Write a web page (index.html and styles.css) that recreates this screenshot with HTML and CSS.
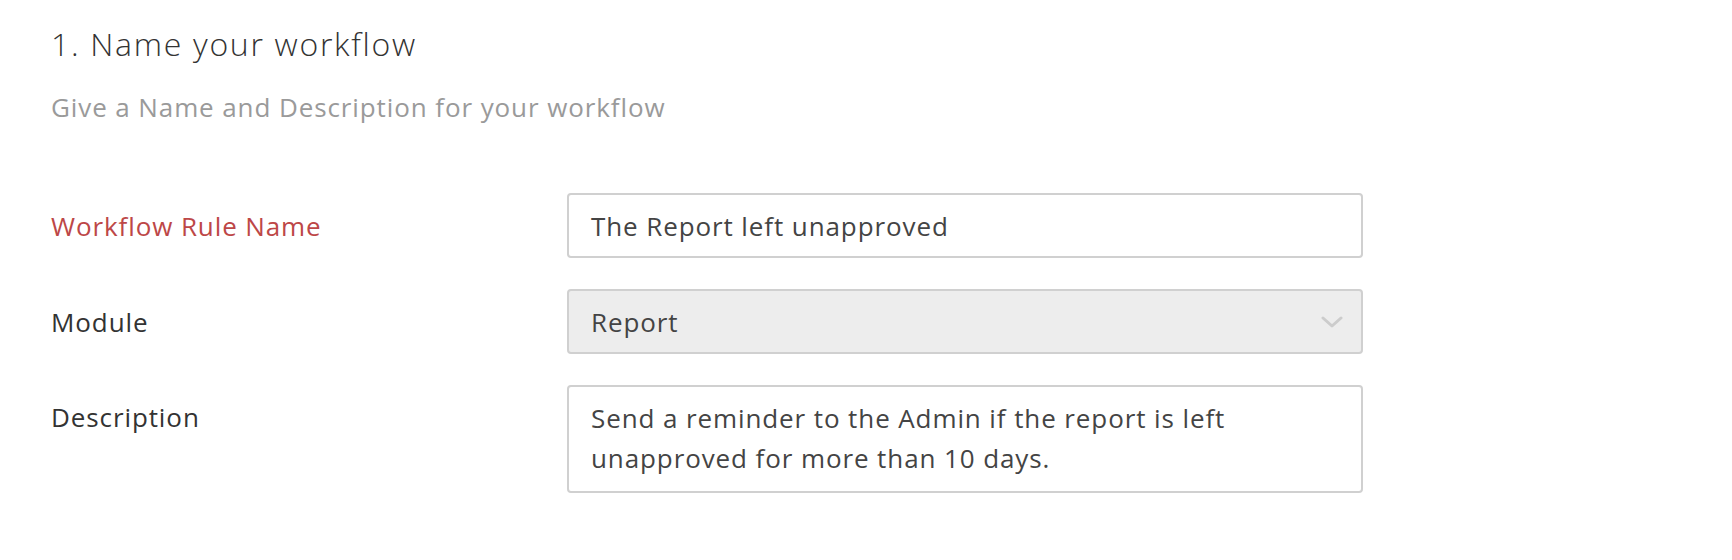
FILE: index.html
```html
<!DOCTYPE html>
<html>
<head>
<meta charset="utf-8">
<link rel="stylesheet" href="styles.css">
</head>
<body>
<div class="page">
  <h1 class="title">1. Name your workflow</h1>
  <p class="subtitle">Give a Name and Description for your workflow</p>
  <div class="form">
    <div class="row">
      <label class="label required">Workflow Rule Name</label>
      <div class="field input">The Report left unapproved</div>
    </div>
    <div class="row">
      <label class="label">Module</label>
      <div class="field select">
        <span>Report</span>
        <svg class="chev" width="22" height="12" viewBox="0 0 22 12"><path d="M2 2 L11 10 L20 2" fill="none" stroke="#cccccc" stroke-width="3" stroke-linecap="round" stroke-linejoin="round"/></svg>
      </div>
    </div>
    <div class="row top">
      <label class="label">Description</label>
      <div class="field textarea">Send a reminder to the Admin if the report is left<br>unapproved for more than 10 days.</div>
    </div>
  </div>
</div>
</body>
</html>
```
FILE: styles.css
```css
html, body {
  margin: 0;
  padding: 0;
  background: #ffffff;
}
.page {
  padding: 24px 0 0 51px;
  font-family: "Open Sans", "Liberation Sans", sans-serif;
  color: #333333;
}
.title {
  margin: 0;
  font-size: 32px;
  font-weight: 300;
  line-height: 40px;
  letter-spacing: 1.7px;
  color: #333333;
}
.subtitle {
  margin: 26px 0 0 0;
  font-size: 26px;
  line-height: 34px;
  letter-spacing: 0.9px;
  color: #9a9a9a;
}
.form {
  margin-top: 69px;
  display: flex;
  flex-direction: column;
  gap: 31px;
}
.row {
  display: flex;
  align-items: center;
}
.row.top {
  align-items: flex-start;
}
.label {
  width: 516px;
  flex: none;
  font-size: 26px;
  letter-spacing: 0.9px;
  color: #333333;
}
.label.required {
  color: #bd4747;
}
.row.top .label {
  padding-top: 14px;
}
.field {
  width: 796px;
  box-sizing: border-box;
  border: 2px solid #d0d0d0;
  border-radius: 4px;
  font-size: 26px;
  letter-spacing: 0.9px;
  color: #444444;
  padding: 0 22px;
}
.input {
  height: 65px;
  display: flex;
  align-items: center;
  background: #fff;
}
.select {
  height: 65px;
  display: flex;
  align-items: center;
  justify-content: space-between;
  background: #ededed;
  padding-right: 18px;
}
.textarea {
  height: 108px;
  padding-top: 11px;
  line-height: 40px;
  background: #fff;
}
.chev {
  display: block;
}
```
